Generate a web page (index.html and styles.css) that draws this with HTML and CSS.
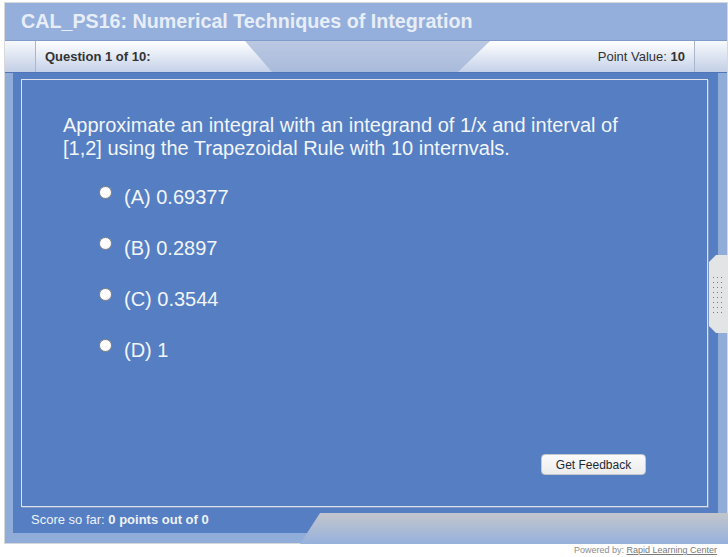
FILE: index.html
```html
<!DOCTYPE html>
<html>
<head>
    <title>CAL_PS16 Quiz</title>
    <link rel="stylesheet" href="styles.css">
</head>
<body>
    <div class="frame">
        <div class="title">CAL_PS16: Numerical Techniques of Integration</div>
        <div class="qbar">
            <div class="cap cap-left"></div>
            <div class="tab tab-left">Question 1 of 10:</div>
            <div class="gap"></div>
            <div class="tab tab-right">Point Value: <b>10</b></div>
            <div class="cap cap-right"></div>
        </div>
        <div class="panel">
            <div class="card">
                <p class="question">Approximate an integral with an integrand of 1/x and interval of [1,2] using the Trapezoidal Rule with 10 internvals.</p>
                <ul class="options">
                    <li><span class="radio"></span>(A) 0.69377</li>
                    <li><span class="radio"></span>(B) 0.2897</li>
                    <li><span class="radio"></span>(C) 0.3544</li>
                    <li><span class="radio"></span>(D) 1</li>
                </ul>
                <div class="actions">
                    <button class="feedback">Get Feedback</button>
                </div>
            </div>
            <div class="score">Score so far: <b>0 points out of 0</b></div>
        </div>
        <div class="bottom-tab"></div>
        <div class="handle">
            <div class="dots">
                <i></i><i></i><i></i><i></i><i></i><i></i><i></i><i></i>
                <i></i><i></i><i></i><i></i><i></i><i></i><i></i><i></i>
                <i></i><i></i><i></i><i></i><i></i><i></i><i></i><i></i>
            </div>
        </div>
    </div>
    <div class="powered">Powered by: <a href="#">Rapid Learning Center</a></div>
</body>
</html>
```

FILE: styles.css
```css
body {
    margin: 0;
    background: #fff;
    font-family: "Liberation Sans", Arial, sans-serif;
}
.frame {
    position: relative;
    width: 722px;
    margin: 2px 0 0 4px;
    border: 1px solid #d6d8dc;
    background: #90acd9;
    padding-bottom: 10px;
}
.title {
    height: 37px;
    line-height: 37px;
    padding-left: 16px;
    font-size: 19.7px;
    font-weight: bold;
    color: #e8eef8;
    background: #94afdc;
}
.qbar {
    display: flex;
    height: 31px;
    border-top: 1px solid #7f9acb;
    border-bottom: 1px solid #4f74b8;
    background: linear-gradient(#bac8e2, #a9bbdb);
    font-size: 13px;
    color: #333;
}
.cap {
    background: linear-gradient(#f7f9fc, #c3cfe6);
}
.cap-left {
    width: 30px;
    border-right: 1px solid #aab6cc;
}
.cap-right {
    width: 32px;
    border-left: 1px solid #aab6cc;
}
.tab {
    width: 236px;
    line-height: 31px;
    background: linear-gradient(#ffffff, #c5d1e9);
}
.tab-left {
    padding-left: 9px;
    box-sizing: border-box;
    font-weight: bold;
    clip-path: polygon(0 0, 209px 0, 100% 100%, 0 100%);
}
.tab-right {
    padding-right: 9px;
    box-sizing: border-box;
    text-align: right;
    clip-path: polygon(32px 0, 100% 0, 100% 100%, 0 100%);
}
.gap {
    flex: 1;
}
.panel {
    display: flex;
    flex-direction: column;
    height: 460px;
    margin: 0 9px 0 8px;
    background: #557fc2;
}
.card {
    display: flex;
    flex-direction: column;
    height: 428px;
    box-sizing: border-box;
    margin: 6px 10px 0 8px;
    padding: 34px 41px 31px 41px;
    border: 1px solid #dde2ea;
    box-shadow: 1px 1px 0 #7f97c4;
    color: #f2f5fa;
    font-size: 20px;
    line-height: 23px;
}
.question {
    max-width: 580px;
    margin: 0;
}
.options {
    list-style: none;
    margin: 26px 0 0 36px;
    padding: 0;
}
.options li {
    display: flex;
    align-items: flex-start;
    margin-bottom: 28px;
}
.radio {
    width: 11px;
    height: 11px;
    margin-right: 12px;
    border: 1px solid #8a8a8a;
    border-radius: 50%;
    background: radial-gradient(circle at 40% 40%, #ffffff 55%, #dcdcdc);
}
.actions {
    display: flex;
    justify-content: flex-end;
    margin-top: auto;
    padding-right: 20px;
}
.feedback {
    width: 105px;
    height: 21px;
    padding: 0;
    border: 1px solid #c4c8ce;
    border-radius: 4px;
    background: linear-gradient(#fbfbfb, #ececec);
    font-family: "Liberation Sans", Arial, sans-serif;
    font-size: 12px;
    color: #1c2a36;
}
.score {
    height: 26px;
    line-height: 26px;
    padding-left: 18px;
    font-size: 13px;
    color: #eef2f8;
}
.bottom-tab {
    position: absolute;
    left: 295px;
    right: -1px;
    bottom: -1px;
    height: 31px;
    background: linear-gradient(#c3c6cc, #96b1dd);
    clip-path: polygon(20px 0, 100% 0, 100% 100%, 0 100%);
}
.handle {
    position: absolute;
    right: -1px;
    top: 252px;
    width: 19px;
    height: 78px;
    background: #e3e4e6;
    clip-path: polygon(7px 0, 100% 0, 100% 100%, 7px 100%, 0 calc(100% - 7px), 0 7px);
}
.dots {
    display: grid;
    grid-template-columns: repeat(3, 1px);
    grid-auto-rows: 1px;
    column-gap: 3px;
    row-gap: 4px;
    margin: 22px 0 0 4px;
}
.dots i {
    background: #7a7a7a;
}
.powered {
    width: 717px;
    text-align: right;
    font-size: 9px;
    line-height: 12px;
    color: #8c8c8c;
}
.powered a {
    color: #7a7a7a;
}
```
